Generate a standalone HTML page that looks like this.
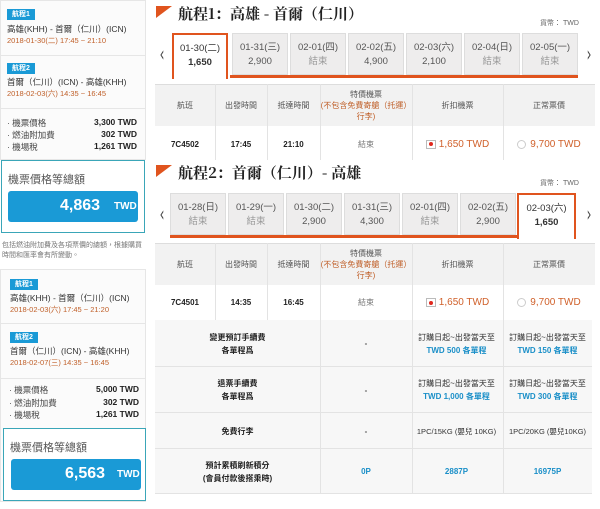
<!DOCTYPE html>
<html><head><meta charset="utf-8"><style>
*{margin:0;padding:0;box-sizing:border-box}
body{width:600px;height:509px;background:#fff;position:relative;overflow:hidden;font-family:"Liberation Sans","Noto Sans CJK TC",sans-serif;color:#333;font-size:9px}
.a{position:absolute}
.card{position:absolute;left:0;width:146px;background:#fff;border:1px solid #e6e6e6}
.badge{position:absolute;left:7px;width:28px;height:11px;background:#1a9ad6;color:#fff;font-size:7px;font-weight:bold;text-align:center;line-height:11px}
.rt{position:absolute;left:7px;font-size:8.5px;color:#333;white-space:nowrap}
.dt{position:absolute;left:7px;font-size:7.5px;color:#c0602a;white-space:nowrap}
.hr{position:absolute;left:0;width:146px;height:1px;background:#e6e6e6}
.pl{position:absolute;left:7px;font-size:8.5px;color:#444}
.pv{position:absolute;left:50px;width:87px;text-align:right;font-size:8.5px;font-weight:bold;color:#222}
.tot{position:absolute;left:1px;width:144px;border:1px solid #3aa6b8;background:#fff}
.tot .l{position:absolute;left:6px;font-size:11px;color:#555}
.tot .b{position:absolute;left:6px;width:130px;height:31px;background:#1a9ad6;border-radius:3px;color:#fff;font-weight:bold}
.tab{position:absolute;width:56px;height:42px;background:#eeeded;border:1px solid #ddd;text-align:center;font-size:9.5px;color:#555;padding-top:7px;line-height:14px}
.tab.sel{background:#fff;border:2px solid #e0541e;border-bottom:none;color:#333;height:46px}
.tab .g{color:#999}
.ul{position:absolute;height:3px;background:#e0541e}
.th{position:absolute;left:155px;width:440px;background:#f2f2f2;border-top:1px solid #ddd}
.cell{position:absolute;text-align:center;font-size:8px;color:#555;display:flex;align-items:center;justify-content:center;line-height:11px}
.vl{position:absolute;width:1px;background:#e3e3e3}
.title{position:absolute;left:178px;font-family:"Noto Serif CJK SC",serif;font-weight:bold;font-size:15px;color:#222}
.flag{position:absolute;left:156px;width:0;height:0;border-top:12px solid #e0541e;border-right:16px solid transparent}
.arrow{position:absolute;font-size:20px;color:#444;font-family:"DejaVu Sans",sans-serif;transform:scaleX(.6)}
.cur{position:absolute;left:540px;font-size:7px;color:#666}
.rad{display:inline-block;width:10px;height:9px;border:1px solid #bbb;margin-right:3px;vertical-align:-1px;position:relative}
.rad:after{content:"";position:absolute;left:2.5px;top:1.5px;width:4px;height:4px;border-radius:50%;background:#e0281e}
.rad2{display:inline-block;width:9px;height:9px;border:1px solid #ccc;border-radius:50%;margin-right:4px;vertical-align:-1px}
.or{color:#d0602a;font-size:10px}
.bl{color:#1a8fc8;font-weight:bold}
.ir{position:absolute;left:155px;width:437px;background:#f7f7f7;border-bottom:1px solid #e3e3e3}
</style></head><body>

<div class="card" style="top:0;height:160px;background:#fbfbfb"></div>
<div class="badge" style="top:9px">航程1</div>
<div class="rt" style="top:23px">高雄(KHH) - 首爾（仁川）(ICN)</div>
<div class="dt" style="top:35px">2018-01-30(二) 17:45 ~ 21:10</div>
<div class="hr" style="top:55px"></div>
<div class="badge" style="top:63px">航程2</div>
<div class="rt" style="top:76px">首爾（仁川）(ICN) - 高雄(KHH)</div>
<div class="dt" style="top:88px">2018-02-03(六) 14:35 ~ 16:45</div>
<div class="hr" style="top:108px"></div>
<div class="pl" style="top:117px">· 機票價格</div><div class="pv" style="top:117px">3,300 TWD</div>
<div class="pl" style="top:129px">· 燃油附加費</div><div class="pv" style="top:129px">302 TWD</div>
<div class="pl" style="top:141px">· 機場稅</div><div class="pv" style="top:141px">1,261 TWD</div>
<div class="tot" style="top:160px;height:73px"><div class="l" style="top:10px">機票價格等總額</div><div class="b" style="top:30px"><span class="a" style="left:52px;top:6px;font-size:16px">4,863</span><span class="a" style="left:106px;top:10px;font-size:10px">TWD</span></div></div>
<div class="a" style="left:2px;top:241px;width:145px;font-size:7px;color:#777;line-height:10px">包括燃油附加費及各項票價的總額，根據購買時間和匯率會有所變動。</div>

<div class="card" style="top:269px;height:233px;background:#fbfbfb"></div>
<div class="badge" style="top:279px;left:10px">航程1</div>
<div class="rt" style="top:292px;left:10px">高雄(KHH) - 首爾（仁川）(ICN)</div>
<div class="dt" style="top:304px;left:10px">2018-02-03(六) 17:45 ~ 21:20</div>
<div class="hr" style="top:323px"></div>
<div class="badge" style="top:332px;left:10px">航程2</div>
<div class="rt" style="top:345px;left:10px">首爾（仁川）(ICN) - 高雄(KHH)</div>
<div class="dt" style="top:357px;left:10px">2018-02-07(三) 14:35 ~ 16:45</div>
<div class="hr" style="top:378px"></div>
<div class="pl" style="top:384px;left:9px">· 機票價格</div><div class="pv" style="top:384px;left:52px">5,000 TWD</div>
<div class="pl" style="top:397px;left:9px">· 燃油附加費</div><div class="pv" style="top:397px;left:52px">302 TWD</div>
<div class="pl" style="top:409px;left:9px">· 機場稅</div><div class="pv" style="top:409px;left:52px">1,261 TWD</div>
<div class="tot" style="top:428px;height:73px;left:3px;width:143px"><div class="l" style="top:10px">機票價格等總額</div><div class="b" style="top:30px;left:7px"><span class="a" style="left:54px;top:6px;font-size:16px">6,563</span><span class="a" style="left:106px;top:10px;font-size:10px">TWD</span></div></div>

<div class="flag" style="top:6px"></div>
<div class="title" style="top:3px">航程1：高雄 - 首爾（仁川）</div>
<div class="cur" style="top:18px">貨幣： TWD</div>
<div class="arrow" style="left:158px;top:42px">‹</div>
<div class="arrow" style="left:585px;top:42px">›</div>
<div class="tab sel" style="left:172px;top:33px">01-30(二)<br><b>1,650</b></div>
<div class="tab" style="left:232px;top:33px">01-31(三)<br>2,900</div>
<div class="tab" style="left:290px;top:33px">02-01(四)<br><span class="g">結束</span></div>
<div class="tab" style="left:348px;top:33px">02-02(五)<br>4,900</div>
<div class="tab" style="left:406px;top:33px">02-03(六)<br>2,100</div>
<div class="tab" style="left:464px;top:33px">02-04(日)<br><span class="g">結束</span></div>
<div class="tab" style="left:522px;top:33px;width:56px">02-05(一)<br><span class="g">結束</span></div>
<div class="ul" style="left:230px;top:75px;width:348px"></div>
<div class="th" style="top:84px;height:42px"></div>
<div class="cell" style="left:155px;top:84px;width:60px;height:42px">航班</div>
<div class="cell" style="left:215px;top:84px;width:52px;height:42px">出發時間</div>
<div class="cell" style="left:267px;top:84px;width:53px;height:42px">抵達時間</div>
<div class="cell" style="left:320px;top:84px;width:92px;height:42px;flex-direction:column">特價機票<span style="color:#c0602a">(不包含免費寄艙（托運）行李)</span></div>
<div class="cell" style="left:412px;top:84px;width:91px;height:42px">折扣機票</div>
<div class="cell" style="left:503px;top:84px;width:92px;height:42px">正常票價</div>
<div class="cell" style="left:155px;top:126px;width:60px;height:36px;font-weight:bold;color:#222">7C4502</div>
<div class="cell" style="left:215px;top:126px;width:52px;height:36px;font-weight:bold;color:#222">17:45</div>
<div class="cell" style="left:267px;top:126px;width:53px;height:36px;font-weight:bold;color:#222">21:10</div>
<div class="cell" style="left:320px;top:126px;width:92px;height:36px;color:#777">結束</div>
<div class="cell" style="left:412px;top:126px;width:91px;height:36px"><span class="rad"></span><span class="or">1,650 TWD</span></div>
<div class="cell" style="left:503px;top:126px;width:92px;height:36px"><span class="rad2"></span><span class="or">9,700 TWD</span></div>
<div class="vl" style="left:215px;top:84px;height:76px"></div><div class="vl" style="left:267px;top:84px;height:76px"></div><div class="vl" style="left:320px;top:84px;height:76px"></div><div class="vl" style="left:412px;top:84px;height:76px"></div><div class="vl" style="left:503px;top:84px;height:76px"></div>

<div class="flag" style="top:165px"></div>
<div class="title" style="top:162px">航程2：首爾（仁川）- 高雄</div>
<div class="cur" style="top:178px">貨幣： TWD</div>
<div class="arrow" style="left:158px;top:202px">‹</div>
<div class="arrow" style="left:585px;top:202px">›</div>
<div class="tab" style="left:170px;top:193px">01-28(日)<br><span class="g">結束</span></div>
<div class="tab" style="left:228px;top:193px">01-29(一)<br><span class="g">結束</span></div>
<div class="tab" style="left:286px;top:193px">01-30(二)<br>2,900</div>
<div class="tab" style="left:344px;top:193px">01-31(三)<br>4,300</div>
<div class="tab" style="left:402px;top:193px">02-01(四)<br><span class="g">結束</span></div>
<div class="tab" style="left:460px;top:193px">02-02(五)<br>2,900</div>
<div class="tab sel" style="left:517px;top:193px;width:59px">02-03(六)<br><b>1,650</b></div>
<div class="ul" style="left:170px;top:235px;width:349px"></div>
<div class="th" style="top:243px;height:42px"></div>
<div class="cell" style="left:155px;top:243px;width:60px;height:42px">航班</div>
<div class="cell" style="left:215px;top:243px;width:52px;height:42px">出發時間</div>
<div class="cell" style="left:267px;top:243px;width:53px;height:42px">抵達時間</div>
<div class="cell" style="left:320px;top:243px;width:92px;height:42px;flex-direction:column">特價機票<span style="color:#c0602a">(不包含免費寄艙（托運）行李)</span></div>
<div class="cell" style="left:412px;top:243px;width:91px;height:42px">折扣機票</div>
<div class="cell" style="left:503px;top:243px;width:92px;height:42px">正常票價</div>
<div class="cell" style="left:155px;top:285px;width:60px;height:35px;font-weight:bold;color:#222">7C4501</div>
<div class="cell" style="left:215px;top:285px;width:52px;height:35px;font-weight:bold;color:#222">14:35</div>
<div class="cell" style="left:267px;top:285px;width:53px;height:35px;font-weight:bold;color:#222">16:45</div>
<div class="cell" style="left:320px;top:285px;width:92px;height:35px;color:#777">結束</div>
<div class="cell" style="left:412px;top:285px;width:91px;height:35px"><span class="rad"></span><span class="or">1,650 TWD</span></div>
<div class="cell" style="left:503px;top:285px;width:92px;height:35px"><span class="rad2"></span><span class="or">9,700 TWD</span></div>

<div class="ir" style="top:320px;height:47px"></div>
<div class="ir" style="top:367px;height:46px"></div>
<div class="ir" style="top:413px;height:36px"></div>
<div class="ir" style="top:449px;height:45px"></div>
<div class="vl" style="left:215px;top:243px;height:77px"></div><div class="vl" style="left:267px;top:243px;height:77px"></div><div class="vl" style="left:320px;top:243px;height:251px"></div><div class="vl" style="left:412px;top:243px;height:251px"></div><div class="vl" style="left:503px;top:243px;height:251px"></div>
<div class="cell" style="left:155px;top:320px;width:165px;height:47px;font-weight:bold;color:#222;flex-direction:column;line-height:13px">變更預訂手續費<br>各單程爲</div>
<div class="cell" style="left:320px;top:320px;width:92px;height:47px;font-weight:bold">-</div>
<div class="cell" style="left:410px;top:320px;width:93px;height:47px;flex-direction:column;line-height:13px;color:#333">訂購日起~出發當天至<span class="bl">TWD 500 各單程</span></div>
<div class="cell" style="left:501px;top:320px;width:93px;height:47px;flex-direction:column;line-height:13px;color:#333">訂購日起~出發當天至<span class="bl">TWD 150 各單程</span></div>
<div class="cell" style="left:155px;top:367px;width:165px;height:46px;font-weight:bold;color:#222;flex-direction:column;line-height:13px">退票手續費<br>各單程爲</div>
<div class="cell" style="left:320px;top:367px;width:92px;height:46px;font-weight:bold">-</div>
<div class="cell" style="left:410px;top:367px;width:93px;height:46px;flex-direction:column;line-height:13px;color:#333">訂購日起~出發當天至<span class="bl">TWD 1,000 各單程</span></div>
<div class="cell" style="left:501px;top:367px;width:93px;height:46px;flex-direction:column;line-height:13px;color:#333">訂購日起~出發當天至<span class="bl">TWD 300 各單程</span></div>
<div class="cell" style="left:155px;top:413px;width:165px;height:36px;font-weight:bold;color:#222">免費行李</div>
<div class="cell" style="left:320px;top:413px;width:92px;height:36px;font-weight:bold">-</div>
<div class="cell" style="left:410px;top:413px;width:93px;height:36px;color:#333;font-size:7.5px">1PC/15KG (嬰兒 10KG)</div>
<div class="cell" style="left:501px;top:413px;width:93px;height:36px;color:#333;font-size:7.5px">1PC/20KG (嬰兒10KG)</div>
<div class="cell" style="left:155px;top:449px;width:165px;height:45px;font-weight:bold;color:#222;flex-direction:column;line-height:13px">預計累積刷新積分<br>(會員付款後搭乘時)</div>
<div class="cell bl" style="left:320px;top:449px;width:92px;height:45px">0P</div>
<div class="cell bl" style="left:410px;top:449px;width:93px;height:45px">2887P</div>
<div class="cell bl" style="left:501px;top:449px;width:93px;height:45px">16975P</div>
</body></html>
